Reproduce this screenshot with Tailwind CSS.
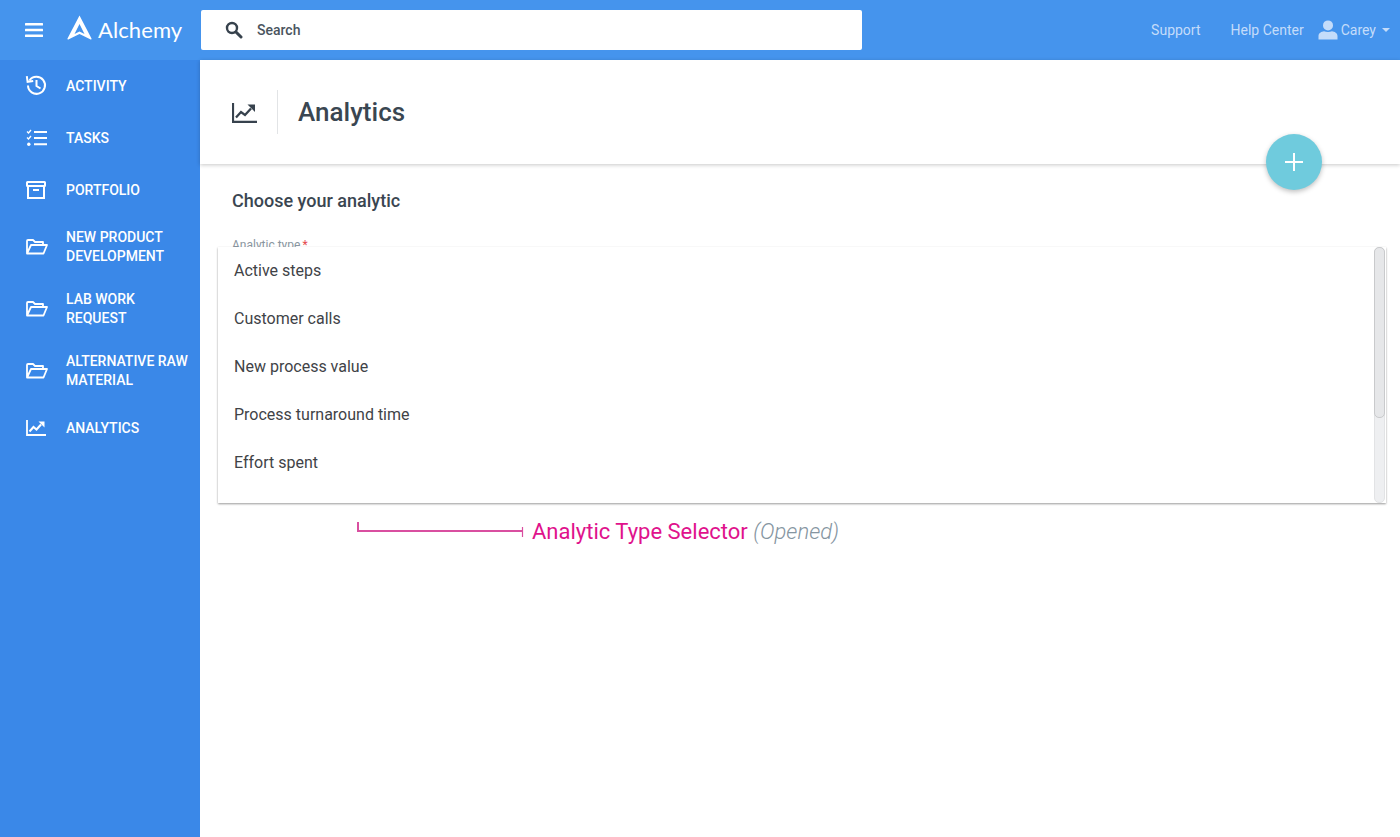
<!DOCTYPE html>
<html lang="en">
<head>
    <meta charset="UTF-8">
    <title>Alchemy - Analytics</title>
    <script src="https://cdn.jsdelivr.net/npm/@tailwindcss/browser@4"></script>
</head>
<body class="h-[837px] overflow-hidden bg-white font-['Roboto',sans-serif] text-[#37424d]">
    <!-- top bar -->
    <header class="h-[60px] bg-[#4594ed] flex items-center">
        <button class="w-[67px] pl-[25px] flex">
            <svg width="18" height="16" viewBox="0 0 18 16" fill="white"><rect y="1" width="18" height="2.6" rx="0.5"/><rect y="6.7" width="18" height="2.6" rx="0.5"/><rect y="12.4" width="18" height="2.6" rx="0.5"/></svg>
        </button>
        <div class="w-[134px] flex items-center">
            <svg width="25" height="26" viewBox="0 0 25 26" fill="white" class="mb-[4px]"><path fill-rule="evenodd" d="M12.500 0.500 24.500 23.500C24.700 24.300 24 24.800 23.200 24.300L12.500 19 1.800 24.300C1 24.800 .3 24.300 .5 23.500ZM12.500 9 7.500 19 12.500 16.400 17.500 19Z"/></svg>
            <span class="ml-[6px] mb-[1px] text-[22px] leading-none tracking-[0.1px] text-white font-['Lato',sans-serif]">Alchemy</span>
        </div>
        <div class="w-[661px] h-[40px] bg-white rounded-[2px] flex items-center pl-[24px]">
            <svg width="18" height="18" viewBox="0 0 18 18" fill="none" stroke="#37424d"><circle cx="7" cy="7" r="5" stroke-width="2.400"/><path d="M11 11l5 5" stroke-width="3" stroke-linecap="round"/></svg>
            <span class="ml-[14px] text-[14px] font-medium text-[#4a545e]">Search</span>
        </div>
        <nav class="ml-auto flex items-center text-[14px] text-[#c4dcfa]">
            <a class="mr-[30px]">Support</a>
            <a class="mr-[14px]">Help Center</a>
            <svg width="20" height="20" viewBox="0 0 20 20" fill="#c4dcfa"><circle cx="10" cy="5.400" r="5"/><path d="M0.500 19.500V16c0-3 3-4.500 5.500-4.800 2.500 1 5.500 1 8 0 2.500.3 5.500 1.800 5.500 4.800v3.500z"/></svg>
            <span class="ml-[3px]">Carey</span>
            <span class="ml-[6px] mr-[10px] w-0 h-0 border-x-[4px] border-x-transparent border-t-[4px] border-t-[#c4dcfa]"></span>
        </nav>
    </header>

    <div class="relative flex h-[777px]">
        <!-- sidebar -->
        <aside class="w-[200px] shrink-0 bg-[#3a88e8] text-white text-[14px] font-medium leading-[19px]">
            <a class="h-[52px] flex items-center pl-[25px]">
                <svg class="mr-[19px] mb-[2px]" width="22" height="22" viewBox="0 0 22 22" fill="none" stroke="white" stroke-width="2"><path d="M4.500 6.500A8.500 8.500 0 1 1 3 11.500"/><path d="M1.800 2.200 2.600 7.800 8.200 7"/><path d="M11.500 6v6l4 2.500"/></svg>
                <span class="mt-px">ACTIVITY</span>
            </a>
            <a class="h-[52px] flex items-center pl-[26px]">
                <svg class="mr-[18px]" width="22" height="18" viewBox="0 0 22 18" fill="none" stroke="white"><path d="M1 2.500l1.500 1.500L5 1M1 8.500l1.500 1.500L5 7" stroke-width="1.300"/><circle cx="2.800" cy="15.200" r="1.700" fill="white" stroke="none"/><path d="M8 3h13M8 9h13M8 15.200h13" stroke-width="2"/></svg>
                <span class="mt-px">TASKS</span>
            </a>
            <a class="h-[52px] flex items-center pl-[26px]">
                <svg class="mr-[20px] mb-[1px]" width="20" height="18" viewBox="0 0 20 18" fill="none" stroke="white" stroke-width="2"><rect x="1" y="1" width="18" height="4" rx="0.500"/><path d="M2 5v12h16V5M7 9h6"/></svg>
                <span class="mt-px">PORTFOLIO</span>
            </a>
            <a class="h-[62px] flex items-center pl-[26px]">
                <svg class="mr-[18px]" width="22" height="16" viewBox="0 0 22 16" fill="none" stroke="white" stroke-width="1.800"><path d="M1 14.500V2a1 1 0 0 1 1-1h5l2 2h8v3M1 14.500 5 6h16l-3.500 8.500z" stroke-linejoin="round"/></svg>
                <span>NEW PRODUCT<br>DEVELOPMENT</span>
            </a>
            <a class="h-[62px] flex items-center pl-[26px]">
                <svg class="mr-[18px]" width="22" height="16" viewBox="0 0 22 16" fill="none" stroke="white" stroke-width="1.800"><path d="M1 14.500V2a1 1 0 0 1 1-1h5l2 2h8v3M1 14.500 5 6h16l-3.500 8.500z" stroke-linejoin="round"/></svg>
                <span>LAB WORK<br>REQUEST</span>
            </a>
            <a class="h-[62px] flex items-center pl-[26px]">
                <svg class="mr-[18px]" width="22" height="16" viewBox="0 0 22 16" fill="none" stroke="white" stroke-width="1.800"><path d="M1 14.500V2a1 1 0 0 1 1-1h5l2 2h8v3M1 14.500 5 6h16l-3.500 8.500z" stroke-linejoin="round"/></svg>
                <span class="whitespace-nowrap">ALTERNATIVE RAW<br>MATERIAL</span>
            </a>
            <a class="h-[52px] flex items-center pl-[26px]">
                <svg class="mr-[20px] mb-[1px]" width="20" height="16" viewBox="0 0 20 16" fill="none" stroke="white"><path d="M1 0v15h19" stroke-width="1.800"/><path d="M3.500 11.500l4-4.500 3 2.500 4.500-5" stroke-width="2"/><path d="M12.500 1.500h6v6z" fill="white" stroke="none"/></svg>
                <span class="mt-px">ANALYTICS</span>
            </a>
        </aside>

        <!-- main -->
        <main class="flex-1 min-w-0">
            <div class="h-[104px] flex items-center pl-[32px] shadow-[0_1px_4px_rgba(0,0,0,0.22)]">
                <svg class="mt-[1px]" width="25" height="20" viewBox="0 0 25 20" fill="none" stroke="#37424d"><path d="M1 0v18.800h24" stroke-width="2.200"/><path d="M4 14.500l5-5.500 4 3 6-6.500" stroke-width="2.300"/><path d="M15.500 1.500h7.500v7.500z" fill="#37424d" stroke="none"/></svg>
                <div class="ml-[20px] w-px h-[44px] bg-[#e2e4e6]"></div>
                <h1 class="ml-[20px] text-[26px] font-medium leading-none text-[#3a4651]">Analytics</h1>
            </div>
            <div class="pl-[32px] pt-[26px]">
                <h2 class="text-[18px] font-medium leading-[22px] text-[#3a4651]">Choose your analytic</h2>
                <p class="mt-[26px] text-[12px] leading-[14px] text-[#8a96a0]">Analytic type<span class="ml-[2px] text-[#e5484d]">*</span></p>
            </div>
        </main>

        <!-- add button -->
        <button class="absolute left-[1266px] top-[74px] w-[56px] h-[56px] rounded-full bg-[#6fcbdd] shadow-[0_2px_5px_rgba(0,0,0,0.25)] flex items-center justify-center">
            <svg width="18" height="18" viewBox="0 0 18 18" stroke="white" stroke-width="2"><path d="M9 0v18M0 9h18"/></svg>
        </button>

        <!-- opened select -->
        <div class="absolute left-[218px] top-[187px] w-[1168px] h-[256px] bg-white shadow-[0_1px_2px_rgba(0,0,0,0.4)] flex">
            <ul class="flex-1 text-[16px] text-[#3f4347]">
                <li class="h-[48px] pl-[16px] flex items-center">Active steps</li>
                <li class="h-[48px] pl-[16px] flex items-center">Customer calls</li>
                <li class="h-[48px] pl-[16px] flex items-center">New process value</li>
                <li class="h-[48px] pl-[16px] flex items-center">Process turnaround time</li>
                <li class="h-[48px] pl-[16px] flex items-center">Effort spent</li>
            </ul>
            <div class="w-[11px] mr-[1px] h-full bg-[#eeeff1] border border-[#e2e3e5] rounded-[5px]">
                <div class="h-[171px] -mx-px -mt-px bg-[#e6e7e9] border border-[#c9cacc] rounded-[5px]"></div>
            </div>
        </div>

        <!-- annotation -->
        <div class="absolute left-[357px] top-[458px] flex items-center">
            <svg width="167" height="20" viewBox="0 0 167 20" fill="none" stroke="#d94fa0"><path d="M1 0v9h165" stroke-width="2"/><path d="M165.500 5v10" stroke-width="1.200"/></svg>
            <span class="ml-[8px] text-[22px] leading-[28px] whitespace-nowrap text-[#e0128c]">Analytic Type Selector <em class="font-light text-[#8595a1]">(Opened)</em></span>
        </div>
    </div>
</body>
</html>
